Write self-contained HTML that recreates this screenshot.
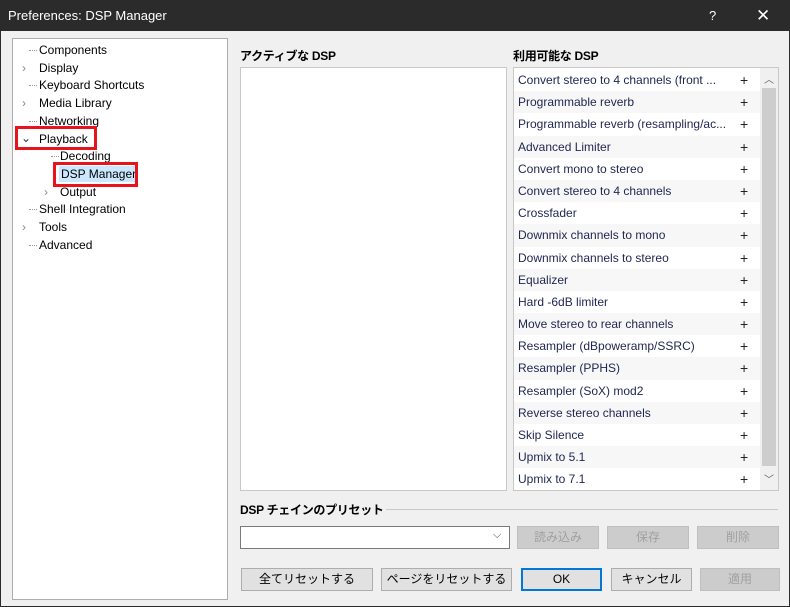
<!DOCTYPE html><html><head><meta charset="utf-8"><style>
*{box-sizing:border-box;margin:0;padding:0}
body{width:790px;height:607px;background:#f0f0f0;font-family:"Liberation Sans","Noto Sans CJK JP",sans-serif;font-size:12px;color:#000;position:relative;overflow:hidden}
.a{position:absolute}
#title{left:0;top:0;width:790px;height:31px;background:#2b2b2b;color:#fff;font-size:13px;line-height:31px;padding-left:8px}
#frame{left:0;top:31px;width:790px;height:576px;border:1px solid #2b2b2b;border-top:none}
#tree{left:12px;top:38px;width:216px;height:562px;background:#fff;border:1px solid #adadad}
.t{position:absolute;font-size:12px;line-height:16px;white-space:nowrap}
.dot{position:absolute;border-top:1px dotted #999;width:8px}
.list{background:#fff;border:1px solid #c8c8c8}
.row{height:22.2px;line-height:22px;padding-left:4px;color:#1e2550;position:relative;white-space:nowrap}
.row:nth-child(even){background:#f7f7f7}
.row span{position:absolute;left:226px;top:0;font-size:14px;color:#222}
.btn{position:absolute;height:23px;border:1px solid #adadad;background:#e1e1e1;text-align:center;line-height:21px;font-size:12px}
.dis{color:#a0a0a0;background:#ccc;border-color:#bfbfbf}
.red{position:absolute;border:3px solid #e8141c}
.h{font-weight:bold;font-size:12px;letter-spacing:-0.3px}
</style></head><body>
<div class="a" id="frame"></div>
<div class="a" id="title">Preferences: DSP Manager<span class="a" style="left:709px;top:0">?</span><span class="a" style="left:756px;top:0;font-size:17px">✕</span></div>
<div class="a" id="tree">
<div class="dot" style="left:16px;top:11px"></div><div class="t" style="left:26px;top:3px">Components</div>
<div class="t" style="left:9px;top:21px;color:#888">›</div><div class="t" style="left:26px;top:21px">Display</div>
<div class="dot" style="left:16px;top:46px"></div><div class="t" style="left:26px;top:38px">Keyboard Shortcuts</div>
<div class="t" style="left:9px;top:56px;color:#888">›</div><div class="t" style="left:26px;top:56px">Media Library</div>
<div class="dot" style="left:16px;top:82px"></div><div class="t" style="left:26px;top:74px">Networking</div>
<div class="t" style="left:8px;top:91px;color:#333">⌄</div><div class="t" style="left:26px;top:92px">Playback</div>
<div class="dot" style="left:38px;top:117px"></div><div class="t" style="left:47px;top:109px">Decoding</div>
<div class="t" style="left:46px;top:127px;background:#cce8ff;padding:0 2px">DSP Manager</div>
<div class="t" style="left:31px;top:145px;color:#888">›</div><div class="t" style="left:47px;top:145px">Output</div>
<div class="dot" style="left:16px;top:170px"></div><div class="t" style="left:26px;top:162px">Shell Integration</div>
<div class="t" style="left:9px;top:180px;color:#888">›</div><div class="t" style="left:26px;top:180px">Tools</div>
<div class="dot" style="left:16px;top:206px"></div><div class="t" style="left:26px;top:198px">Advanced</div>
</div>
<div class="red" style="left:15px;top:126px;width:82px;height:24px"></div>
<div class="red" style="left:53px;top:162px;width:85px;height:25px"></div>
<div class="a h" style="left:240px;top:47px">アクティブな DSP</div>
<div class="a list" style="left:240px;top:67px;width:267px;height:424px"></div>
<div class="a h" style="left:513px;top:47px">利用可能な DSP</div>
<div class="a list" style="left:513px;top:67px;width:266px;height:424px;padding-top:1px">
<div class="row">Convert stereo to 4 channels (front ...<span>+</span></div>
<div class="row">Programmable reverb<span>+</span></div>
<div class="row">Programmable reverb (resampling/ac...<span>+</span></div>
<div class="row">Advanced Limiter<span>+</span></div>
<div class="row">Convert mono to stereo<span>+</span></div>
<div class="row">Convert stereo to 4 channels<span>+</span></div>
<div class="row">Crossfader<span>+</span></div>
<div class="row">Downmix channels to mono<span>+</span></div>
<div class="row">Downmix channels to stereo<span>+</span></div>
<div class="row">Equalizer<span>+</span></div>
<div class="row">Hard -6dB limiter<span>+</span></div>
<div class="row">Move stereo to rear channels<span>+</span></div>
<div class="row">Resampler (dBpoweramp/SSRC)<span>+</span></div>
<div class="row">Resampler (PPHS)<span>+</span></div>
<div class="row">Resampler (SoX) mod2<span>+</span></div>
<div class="row">Reverse stereo channels<span>+</span></div>
<div class="row">Skip Silence<span>+</span></div>
<div class="row">Upmix to 5.1<span>+</span></div>
<div class="row">Upmix to 7.1<span>+</span></div>
<div class="a" style="left:246px;top:0;width:18px;height:422px;background:#f0f0f0"></div>
<div class="a" style="left:248px;top:20px;width:14px;height:378px;background:#cdcdcd"></div>
<div class="a" style="left:250px;top:3px;font-size:10px;color:#606060">︿</div>
<div class="a" style="left:250px;top:403px;font-size:10px;color:#606060">﹀</div>
</div>
<div class="a h" style="left:240px;top:501px">DSP チェインのプリセット</div>
<div class="a" style="left:386px;top:509px;width:392px;border-top:1px solid #c8c8c8"></div>
<div class="a" style="left:240px;top:526px;width:270px;height:23px;background:#fff;border:1px solid #7a7a7a"><span class="a" style="left:252px;top:2px;font-size:11px;color:#444">⌵</span></div>
<div class="btn dis" style="left:517px;top:526px;width:82px">読み込み</div>
<div class="btn dis" style="left:607px;top:526px;width:82px">保存</div>
<div class="btn dis" style="left:697px;top:526px;width:82px">削除</div>
<div class="btn" style="left:241px;top:568px;width:132px">全てリセットする</div>
<div class="btn" style="left:381px;top:568px;width:131px">ページをリセットする</div>
<div class="btn" style="left:521px;top:568px;width:81px;border:2px solid #0078d7;line-height:19px">OK</div>
<div class="btn" style="left:611px;top:568px;width:81px">キャンセル</div>
<div class="btn dis" style="left:700px;top:568px;width:80px">適用</div>
</body></html>
